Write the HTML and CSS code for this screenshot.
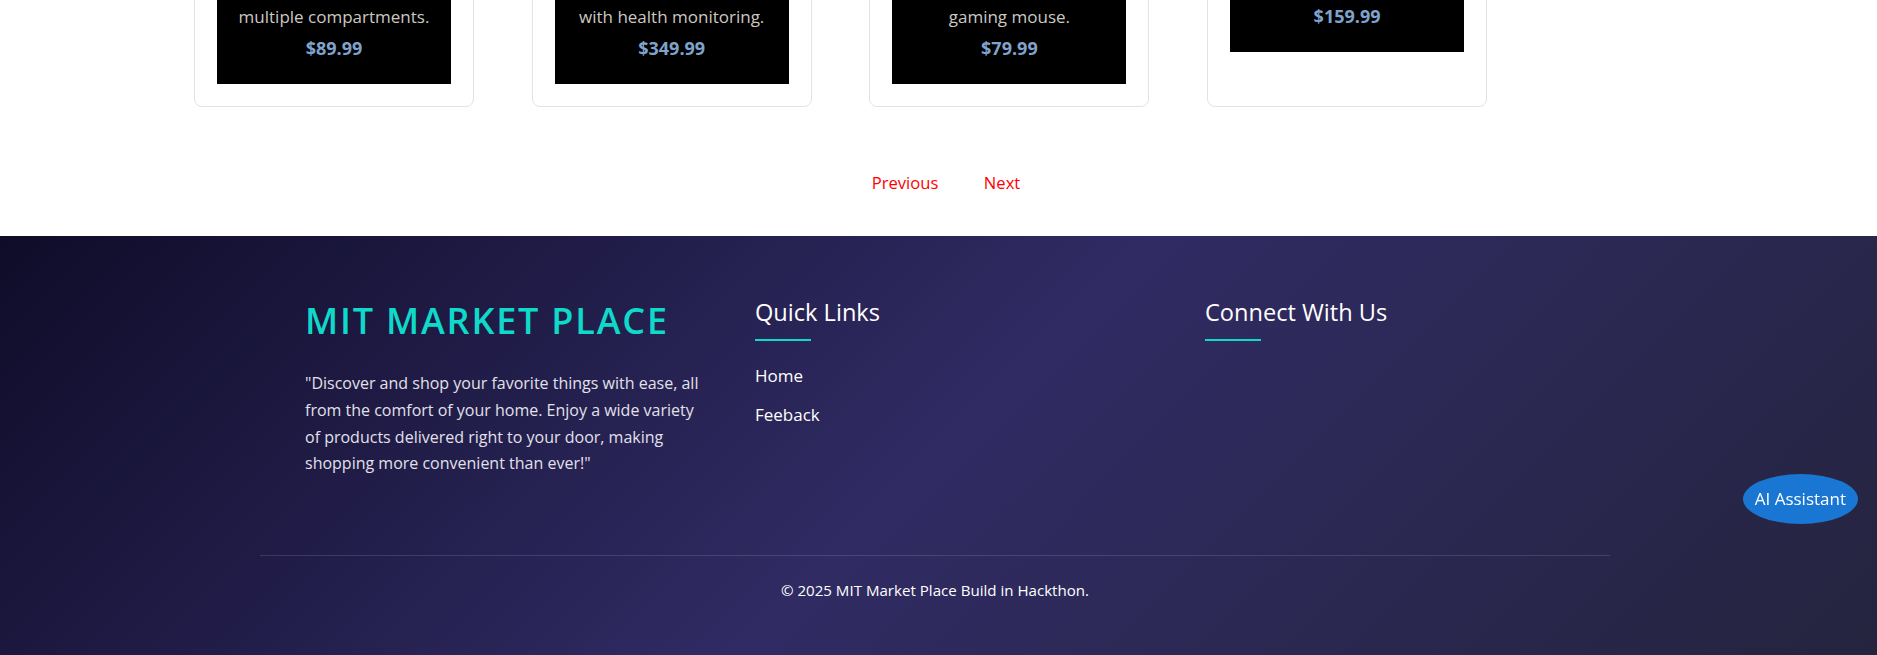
FILE: index.html
```html
<!DOCTYPE html>
<html lang="en">
<head>
<meta charset="utf-8">
<title>MIT Market Place</title>
<link rel="stylesheet" href="styles.css">
</head>
<body>
<main class="products">
  <div class="grid">
    <div class="card"><div class="card-body"><p class="desc">multiple compartments.</p><p class="price">$89.99</p></div></div>
    <div class="card"><div class="card-body"><p class="desc">with health monitoring.</p><p class="price">$349.99</p></div></div>
    <div class="card"><div class="card-body"><p class="desc">gaming mouse.</p><p class="price">$79.99</p></div></div>
    <div class="card"><div class="card-body"><p class="price">$159.99</p></div></div>
  </div>
  <nav class="pagination">
    <a href="#" class="page-link">Previous</a>
    <a href="#" class="page-link">Next</a>
  </nav>
</main>
<footer class="footer">
  <div class="footer-inner">
    <div class="footer-cols">
      <div class="col">
        <h2 class="brand">MIT MARKET PLACE</h2>
        <p class="about">"Discover and shop your favorite things with ease, all from the comfort of your home. Enjoy a wide variety of products delivered right to your door, making shopping more convenient than ever!"</p>
      </div>
      <div class="col">
        <h3 class="col-title">Quick Links</h3>
        <ul class="links">
          <li><a href="#">Home</a></li>
          <li><a href="#">Feeback</a></li>
        </ul>
      </div>
      <div class="col">
        <h3 class="col-title">Connect With Us</h3>
      </div>
    </div>
    <div class="footer-bottom">
      <p>© 2025 MIT Market Place Build in Hackthon.</p>
    </div>
  </div>
</footer>
<button class="ai-btn" type="button">AI Assistant</button>
</body>
</html>
```
FILE: styles.css
```css
html, body {
  margin: 0;
  padding: 0;
}
body {
  font-family: "Open Sans", "Noto Sans", sans-serif;
  background: #ffffff;
  overflow: hidden;
}

/* products */
.grid {
  display: grid;
  grid-template-columns: repeat(4, 280px);
  column-gap: 57.7px;
  padding-left: 194px;
  margin-top: -39px;
}
.card {
  border: 1px solid #e9e0e4;
  border-radius: 8px;
  padding: 22px;
  background: #fff;
}
.card-body {
  background: #000;
  text-align: center;
  padding: 20px 10px 24px;
}
.desc {
  margin: 0 0 7px;
  font-size: 17px;
  line-height: 25px;
  color: #cdc8c0;
}
.price {
  margin: 0;
  font-size: 18px;
  line-height: 24px;
  font-weight: 700;
  color: #7fa3cc;
}

.pagination {
  display: flex;
  justify-content: center;
  gap: 45.5px;
  padding-left: 15px;
  margin: 64px 0 0;
  padding-bottom: 41px;
  font-size: 16.6px;
  line-height: 24px;
}
.page-link {
  color: #ff0000;
  text-decoration: none;
}

/* footer */
.footer {
  background: linear-gradient(135deg, #0f0c29, #302b63, #24243e);
  padding: 61px 7px 60px 0;
  color: #fff;
}
.footer-inner {
  max-width: 1350px;
  margin: 0 auto;
}
.footer-cols {
  display: grid;
  grid-template-columns: repeat(3, 1fr);
}
.col {
  padding-left: 45px;
}
.brand {
  margin: 2px 0 0;
  font-size: 36px;
  line-height: 1.2;
  font-weight: 600;
  letter-spacing: 1.8px;
  color: #0fd9c9;
}
.about {
  margin: 28px 0 0;
  font-size: 16px;
  line-height: 26.7px;
  color: #e2e0ea;
}
.col-title {
  margin: 1px 0 0;
  font-size: 23.6px;
  line-height: 1.2;
  font-weight: 400;
  color: #fff;
}
.col-title::after {
  content: "";
  display: block;
  width: 56px;
  height: 2px;
  margin-top: 12.8px;
  background: #0fd9c9;
}
.links {
  list-style: none;
  margin: 23px 0 0;
  padding: 0;
}
.links li {
  font-size: 17px;
  line-height: 24px;
  margin-bottom: 14.5px;
}
.links a {
  color: #fff;
  text-decoration: none;
}
.footer-bottom {
  margin-top: 78px;
  border-top: 1px solid rgba(255, 255, 255, 0.13);
  padding-top: 22.5px;
  text-align: center;
}
.footer-bottom p {
  margin: 0;
  font-size: 15.1px;
  line-height: 22px;
}

.ai-btn {
  position: fixed;
  right: 19px;
  bottom: 131px;
  padding: 13px 12px;
  border: none;
  border-radius: 50%;
  background: #1976d2;
  color: #fff;
  font-family: "Open Sans", "Noto Sans", sans-serif;
  font-size: 17px;
  line-height: 24px;
}
```
